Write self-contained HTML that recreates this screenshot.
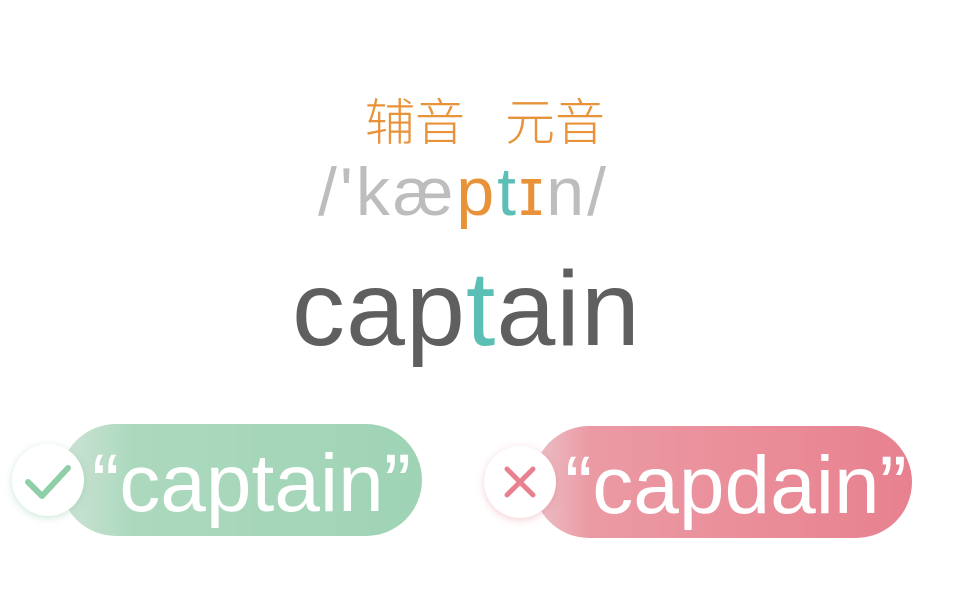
<!DOCTYPE html>
<html><head><meta charset="utf-8"><style>
body{margin:0;width:966px;height:610px;background:#fff;position:relative;overflow:hidden;font-family:"Liberation Sans","Noto Sans CJK SC",sans-serif}
.a{position:absolute;white-space:nowrap;line-height:1}
.pill{position:absolute;border-radius:60px}
.circ{position:absolute;width:72px;height:72px;border-radius:50%;background:#fff}
</style></head><body>
<div class="a" style="left:365px;top:94px;font-size:50px;color:#e8923a;font-family:'Noto Sans CJK SC',sans-serif;font-weight:300">辅音<span style="display:inline-block;width:40px"></span>元音</div>
<div class="a" style="left:318px;top:158px;font-size:68px;color:#bdbdbd;letter-spacing:3px">/'kæ<span style="color:#e8923a">p</span><span style="color:#5bbfb5">t</span><span style="color:#e8923a">ɪ</span>n/</div>
<div class="a" style="left:292px;top:256px;font-size:106px;color:#5f5f5f;letter-spacing:1px">cap<span style="color:#5bbfb5">t</span>ain</div>

<div class="pill" style="left:60px;top:424px;width:362px;height:112px;background:linear-gradient(90deg,#cfe3d6 0%,#acd9be 20%,#9fd3b5 100%)"></div>
<div class="circ" style="left:12px;top:444px;box-shadow:0 2px 8px rgba(120,190,150,.35)"></div>
<svg class="a" style="left:12px;top:444px" width="72" height="72"><path d="M16 38 L30 52 L56 24" fill="none" stroke="#8fcfa8" stroke-width="6" stroke-linecap="round" stroke-linejoin="round"/></svg>
<div class="a" style="left:92px;top:443px;font-size:82px;color:#fff">“captain”</div>

<div class="pill" style="left:533px;top:426px;width:379px;height:112px;background:linear-gradient(90deg,#ebc2c8 0%,#eb9aa4 15%,#e8818f 100%)"></div>
<div class="circ" style="left:484px;top:446px;box-shadow:0 2px 8px rgba(230,120,135,.35)"></div>
<svg class="a" style="left:484px;top:446px" width="72" height="72"><path d="M23 23 L49 49 M49 23 L23 49" fill="none" stroke="#e8818f" stroke-width="5" stroke-linecap="round"/></svg>
<div class="a" style="left:565px;top:445px;font-size:82px;color:#fff">“capdain”</div>
</body></html>
